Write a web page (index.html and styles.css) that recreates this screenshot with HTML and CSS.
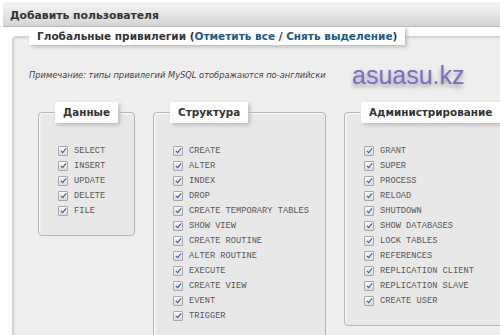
FILE: index.html
```html
<!DOCTYPE html>
<html lang="ru">
<head>
<meta charset="UTF-8" />
<meta name="viewport" content="width=device-width, initial-scale=1" />
<title>Добавить пользователя</title>
<link rel="stylesheet" href="styles.css">
</head>
<body>

<h2 class="titulo">Добавить пользователя</h2>

<fieldset class="global">
  <legend>Глобальные привилегии (<a href="#">Отметить все</a> / <a href="#">Снять выделение</a>)</legend>
  <p class="nota">Примечание: типы привилегий MySQL отображаются по-английски</p>

  <div class="grupos">
    <fieldset class="grupo">
      <legend>Данные</legend>
      <label class="priv"><input type="checkbox" checked>SELECT</label>
      <label class="priv"><input type="checkbox" checked>INSERT</label>
      <label class="priv"><input type="checkbox" checked>UPDATE</label>
      <label class="priv"><input type="checkbox" checked>DELETE</label>
      <label class="priv"><input type="checkbox" checked>FILE</label>
    </fieldset>

    <fieldset class="grupo">
      <legend>Структура</legend>
      <label class="priv"><input type="checkbox" checked>CREATE</label>
      <label class="priv"><input type="checkbox" checked>ALTER</label>
      <label class="priv"><input type="checkbox" checked>INDEX</label>
      <label class="priv"><input type="checkbox" checked>DROP</label>
      <label class="priv"><input type="checkbox" checked>CREATE TEMPORARY TABLES</label>
      <label class="priv"><input type="checkbox" checked>SHOW VIEW</label>
      <label class="priv"><input type="checkbox" checked>CREATE ROUTINE</label>
      <label class="priv"><input type="checkbox" checked>ALTER ROUTINE</label>
      <label class="priv"><input type="checkbox" checked>EXECUTE</label>
      <label class="priv"><input type="checkbox" checked>CREATE VIEW</label>
      <label class="priv"><input type="checkbox" checked>EVENT</label>
      <label class="priv"><input type="checkbox" checked>TRIGGER</label>
    </fieldset>

    <fieldset class="grupo">
      <legend>Администрирование</legend>
      <label class="priv"><input type="checkbox" checked>GRANT</label>
      <label class="priv"><input type="checkbox" checked>SUPER</label>
      <label class="priv"><input type="checkbox" checked>PROCESS</label>
      <label class="priv"><input type="checkbox" checked>RELOAD</label>
      <label class="priv"><input type="checkbox" checked>SHUTDOWN</label>
      <label class="priv"><input type="checkbox" checked>SHOW DATABASES</label>
      <label class="priv"><input type="checkbox" checked>LOCK TABLES</label>
      <label class="priv"><input type="checkbox" checked>REFERENCES</label>
      <label class="priv"><input type="checkbox" checked>REPLICATION CLIENT</label>
      <label class="priv"><input type="checkbox" checked>REPLICATION SLAVE</label>
      <label class="priv"><input type="checkbox" checked>CREATE USER</label>
    </fieldset>
  </div>
</fieldset>

<!-- водяной знак поверх страницы -->
<div class="marca">asuasu.kz</div>

</body>
</html>
```

FILE: styles.css
```css
/* Базовые настройки */
* {
  box-sizing: border-box;
}
html, body {
  overflow: hidden;
}
body {
  margin: 0;
  width: 560px;
  background: #fff;
  color: #333;
  font-family: 'DejaVu Sans', Verdana, sans-serif;
  position: relative;
}
.titulo {
  margin: 3px 0 0 3px;
  height: 24px;
  padding: 0 7px;
  font-size: 10.8px;
  line-height: 23px;
  font-weight: bold;
  color: #333;
  background: linear-gradient(#f4f4f4, #d4d4d4);
  border-top: 1px solid #e6e6e6;
  border-bottom: 1px solid #b8b8b8;
  border-radius: 4px 0 0 0;
}
/* Внешний блок привилегий */
.global {
  margin: 0 0 0 12px;
  padding: 0 16px 20px;
  border: 1px solid #d4d4d4;
  border-radius: 4px;
  background: #eee;
  box-shadow: 1px 1px 2px #ccc inset;
}
.global > legend {
  padding: 0 8px;
  height: 18px;
  line-height: 18px;
  font-size: 10.5px;
  font-weight: bold;
  color: #333;
  background: #fff;
  box-shadow: 2px 2px 4px #bbb;
}
.global > legend a {
  color: #235a81;
  text-decoration: none;
}
.nota {
  margin: 25px 0 0;
  font-size: 8.3px;
  font-style: italic;
  color: #444;
}
.grupos {
  display: flex;
  align-items: flex-start;
  gap: 18px;
  margin: 22px 0 0 9px;
}
/* Группы: Данные, Структура, Администрирование */
.grupo {
  margin: 0;
  padding: 0 16px 17px;
  border: 1px solid #b6b6b6;
  border-radius: 4px;
  background: #e8e8e8;
  box-shadow: 1px 1px 2px #fff inset;
  display: flex;
  flex-direction: column;
}
.grupo > legend {
  padding: 0 8px;
  height: 21px;
  line-height: 21px;
  font-size: 10.4px;
  font-weight: bold;
  color: #333;
  background: #fff;
  box-shadow: 2px 2px 4px #bbb;
  margin-bottom: 20px;
}
.priv {
  display: flex;
  align-items: center;
  height: 15px;
  font-family: 'Liberation Mono', 'Courier New', monospace;
  font-size: 8.7px;
  color: #585858;
  white-space: nowrap;
}
.priv input {
  appearance: none;
  -webkit-appearance: none;
  position: relative;
  width: 10px;
  height: 10px;
  margin: 0 6px 0 3px;
  border: 1px solid #a8a8a8;
  border-radius: 1px;
  background: linear-gradient(#fafafa, #dcdcdc);
}
/* галочка */
.priv input:checked::after {
  content: '';
  position: absolute;
  left: 2.5px;
  top: 0;
  width: 2px;
  height: 5px;
  border-right: 1.3px solid #3b4fb0;
  border-bottom: 1.3px solid #3b4fb0;
  transform: rotate(40deg);
}
.marca {
  position: absolute;
  left: 352px;
  top: 61px;
  font-family: 'Liberation Sans', Arial, sans-serif;
  font-size: 25px;
  color: #7870c6;
  text-shadow: 0 3px 4px rgba(0, 0, 0, 0.35);
}
```
